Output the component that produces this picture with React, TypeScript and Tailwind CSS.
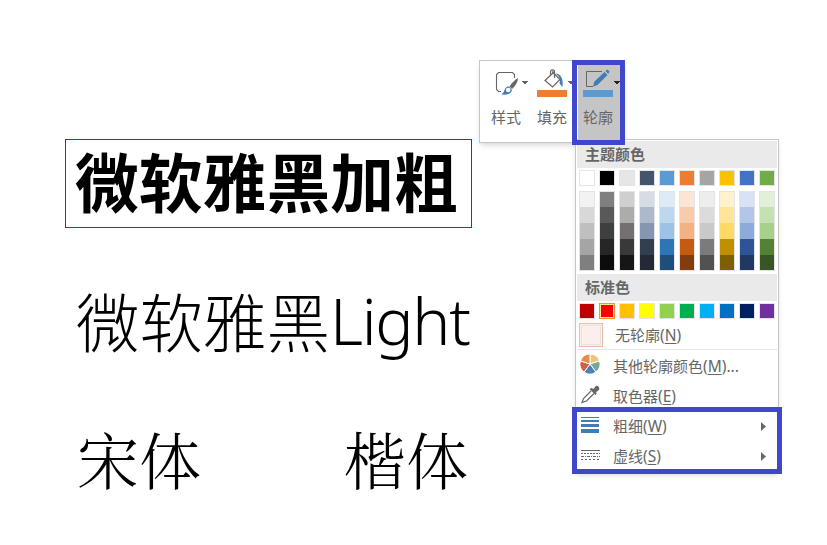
import React from "react";

const themeColors = [
  "#ffffff", "#000000", "#e7e6e6", "#44546a", "#5b9bd5",
  "#ed7d31", "#a5a5a5", "#ffc000", "#4472c4", "#70ad47",
];

const shades = [
  ["#f2f2f2", "#d8d8d8", "#bfbfbf", "#a5a5a5", "#7f7f7f"],
  ["#7f7f7f", "#595959", "#3f3f3f", "#262626", "#0c0c0c"],
  ["#d0cece", "#aeabab", "#757070", "#3a3838", "#171616"],
  ["#d6dce4", "#adb9ca", "#8496b0", "#323f4f", "#222a35"],
  ["#deebf6", "#bdd7ee", "#9cc3e5", "#2e75b5", "#1e4e79"],
  ["#fbe5d5", "#f7cbac", "#f4b183", "#c55a11", "#833c0b"],
  ["#ededed", "#dbdbdb", "#c9c9c9", "#7b7b7b", "#525252"],
  ["#fff2cc", "#fee599", "#ffd965", "#bf9000", "#7f6000"],
  ["#d9e2f3", "#b4c6e7", "#8eaadb", "#2f5496", "#1f3864"],
  ["#e2efd9", "#c5e0b3", "#a8d08d", "#538135", "#375623"],
];

const standardColors = [
  "#c00000", "#ff0000", "#ffc000", "#ffff00", "#92d050",
  "#00b050", "#00b0f0", "#0070c0", "#002060", "#7030a0",
];

function Caret({ dark }: { dark?: boolean }) {
  return (
    <svg width="6" height="3" className="shrink-0" shapeRendering="crispEdges">
      <path d="M0 0H6V1H5V2H4V3H2V2H1V1H0Z" fill={dark ? "#222" : "#666"} />
    </svg>
  );
}

function StyleIcon() {
  return (
    <svg width="24" height="26" viewBox="0 0 24 26" fill="none">
      <path d="M7 20.5H4.500L2.500 18.500V3.500L4.500 1.500H18.500L20.500 3.500V7" stroke="#666" strokeWidth="1.100" />
      <path d="M24 7C21 8.500 17 13 15.500 15.500L18 18C21.500 15 24 10.500 24 7Z" fill="#666" />
      <path d="M15 15.500C11.500 15.500 11 18 10 20.500C9.500 22 8 23 7 23.300C11 24 17 24 18 19Z" fill="#417cb5" />
      <circle cx="14.200" cy="19" r="2.300" fill="white" />
    </svg>
  );
}

function FillIcon() {
  return (
    <svg width="22" height="20" viewBox="0 0 22 20" fill="none">
      <path d="M9 2.500L17 10.500L9.500 18L2 11.500L11 3" stroke="#666" strokeWidth="1.200" />
      <path d="M7.500 6V3Q7.500 .8 9.500 .8T11.500 3V9" stroke="#666" strokeWidth="1.200" />
      <path d="M12.500 4.500C18 4.500 20.500 10 19.500 18L16.500 14.500C18 10 16 7 12.500 4.500Z" fill="#417cb5" />
    </svg>
  );
}

function OutlineIcon() {
  return (
    <svg width="25" height="19" viewBox="0 0 25 19" fill="none">
      <path d="M17 2.500H1.500V17.500H8" stroke="#666" />
      <path d="M8 17.500L9.500 12.500L19.500 3L22.500 6L12.500 16Z" fill="#417cb5" />
      <path d="M20.500 2L22.500 .5L24.500 2.500L23.200 5Z" fill="#417cb5" />
    </svg>
  );
}

function WheelIcon() {
  return (
    <svg width="20" height="20" viewBox="-10 -10 20 20">
      <g stroke="white" strokeWidth="1">
        <path d="M0 0V-10A10 10 0 0 1 9.510 -3.090Z" fill="#ecc57b" />
        <path d="M0 0L9.510 -3.090A10 10 0 0 1 5.880 8.090Z" fill="#77a797" />
        <path d="M0 0L5.880 8.090A10 10 0 0 1 -5.880 8.090Z" fill="#4c80b7" />
        <path d="M0 0L-5.880 8.090A10 10 0 0 1 -9.510 -3.090Z" fill="#d75e40" />
        <path d="M0 0L-9.510 -3.090A10 10 0 0 1 0 -10Z" fill="#e68e4b" />
      </g>
    </svg>
  );
}

function EyedropperIcon() {
  return (
    <svg width="19" height="19" viewBox="0 0 19 19" fill="none">
      <path d="M10 6L2.500 13.500L1 17.500L5.500 16L13 8.500" stroke="#666" strokeWidth="1.200" />
      <path d="M8.500 4L10.500 3L12.500 4L14.500 1.200Q16 0 17.500 1.500T18 5L15.200 7L15.500 9L14.500 10Z" fill="#666" />
    </svg>
  );
}

function WeightIcon() {
  return (
    <svg width="18" height="16" fill="#417cb5" shapeRendering="crispEdges">
      <rect width="18" height="1" />
      <rect y="3" width="18" height="2" />
      <rect y="7" width="18" height="3" />
      <rect y="12" width="18" height="4" />
    </svg>
  );
}

function DashIcon() {
  return (
    <svg width="19" height="10" stroke="#666" shapeRendering="crispEdges">
      <path d="M0 .5H19" />
      <path d="M0 3.500H19" strokeDasharray="2 1" />
      <path d="M0 6.500H19" strokeDasharray="3 1 1 1" />
      <path d="M0 9.500H19" strokeDasharray="2 2" />
    </svg>
  );
}

function Swatches({ colors, selected }: { colors: string[]; selected?: number }) {
  return (
    <div className="flex gap-1 px-0.5">
      {colors.map((color, i) => (
        <div
          key={color}
          className={
            i === selected
              ? "h-4 w-4 border border-[#f29436] p-px outline outline-1 -outline-offset-2 outline-[#ffe294]"
              : "h-4 w-4 border border-[#e2e4e7]"
          }
          style={{ backgroundColor: color }}
        />
      ))}
    </div>
  );
}

function Heading({ children }: { children: React.ReactNode }) {
  return (
    <div className="h-[27px] bg-[#eaeaea] pl-2 text-[15px] leading-[27px] font-bold text-[#666]">
      {children}
    </div>
  );
}

function MenuItem({ icon, label, hotkey, suffix = "", arrow }: {
  icon: React.ReactNode;
  label: string;
  hotkey: string;
  suffix?: string;
  arrow?: boolean;
}) {
  return (
    <div className="flex h-[30px] items-center pr-[11px]">
      <div className="flex w-9 shrink-0 pl-1">{icon}</div>
      <div className="flex-1 text-[15px] leading-[30px] whitespace-nowrap">
        {label}<span className="text-[15.500px]">(<span className="underline underline-offset-2">{hotkey}</span>){suffix}</span>
      </div>
      {arrow && (
        <svg width="5" height="9"><path d="M0 0L5 4.500L0 9Z" fill="#666" /></svg>
      )}
    </div>
  );
}

function Tool({ icon, label, active }: { icon: React.ReactNode; label: string; active?: boolean }) {
  return (
    <div className={`flex h-[81px] w-[46px] flex-col pl-[5px] ${active ? "bg-[#c5c5c5]" : ""}`}>
      <div className="flex h-[43px] w-[42px] items-start">{icon}</div>
      <div className="h-[26px] text-[15px] leading-[26px]">{label}</div>
    </div>
  );
}

export default function App() {
  return (
    <main className="relative flex h-[545px] w-[827px] overflow-hidden bg-white font-['Noto_Sans','Noto_Sans_CJK_SC',sans-serif]">
      <section className="w-[479px] shrink-0 pt-[139px] pl-[65px] whitespace-nowrap text-black">
        <div className="h-[89px] w-[407px] border border-[#e00000] pl-[9px] font-['Noto_Sans_CJK_SC',sans-serif] text-[63.800px] leading-[79px] font-bold">
          微软雅黑加粗
        </div>
        <div className="mt-[46px] flex h-[90px] pl-[11px] text-[63.500px] leading-[90px] font-light">
          <span className="font-['Noto_Sans_CJK_SC_Light','Noto_Sans_CJK_SC',sans-serif]">微软雅黑</span>
          <span className="font-['Noto_Sans',sans-serif] text-[64px] leading-[93px] tracking-[-1.300px]">Light</span>
        </div>
        <div className="mt-[50px] flex h-[90px] gap-[143px] pl-[12px] font-['Noto_Serif_CJK_SC','AR_PL_UMing_CN','Noto_Sans_CJK_SC',serif] text-[62px] leading-[90px] font-light">
          <span>宋体</span>
          <span className="font-['KaiTi','AR_PL_UKai_CN','Noto_Serif_CJK_SC','Noto_Sans_CJK_SC',serif]">楷体</span>
        </div>
      </section>

      <aside className="pt-[60px] text-[#666]">
        <div className="flex h-[83px] w-[146px] border border-[#c6c6c6] bg-white pl-[6px] shadow-md">
          <Tool
            label="样式"
            icon={<><div className="ml-[3px] pt-[10px]"><StyleIcon /></div><div className="ml-1 pt-[20px]"><Caret /></div></>}
          />
          <Tool
            label="填充"
            icon={
              <div className="flex flex-col pt-[8px]">
                <div className="flex h-[21px] items-start"><div className="ml-[6px]"><FillIcon /></div><div className="ml-[3px] pt-3"><Caret /></div></div>
                <div className="h-[7px] w-[30px] bg-[#ed7d31]" />
              </div>
            }
          />
          <Tool
            active
            label="轮廓"
            icon={
              <div className="flex flex-col pt-[8px]">
                <div className="flex h-[21px] items-start"><div className="ml-[2px]"><OutlineIcon /></div><div className="ml-[4px] pt-3"><Caret dark /></div></div>
                <div className="h-[7px] w-[30px] bg-[#5b9bd5]" />
              </div>
            }
          />
        </div>

        <div className="-mt-1 ml-24 h-[334px] w-[204px] border border-[#c6c6c6] bg-white p-px shadow-md">
          <Heading>主题颜色</Heading>
          <div className="pt-0.5"><Swatches colors={themeColors} /></div>
          <div className="flex gap-1 px-0.5 pt-[5px] pb-[3px]">
            {shades.map((column) => (
              <div key={column[0]} className="flex h-20 w-4 flex-col border border-[#e2e4e7]">
                {column.map((color, i) => (
                  <div
                    key={color}
                    className={i === 0 || i === 4 ? "h-[15px]" : "h-4"}
                    style={{ backgroundColor: color }}
                  />
                ))}
              </div>
            ))}
          </div>
          <Heading>标准色</Heading>
          <div className="pt-0.5"><Swatches colors={standardColors} selected={1} /></div>
          <div className="flex h-[30px] items-start pt-1 pl-0.5">
            <div className="h-6 w-6 border border-[#f5b99b] bg-[#fcefeb] p-px">
              <div className="h-full w-full border border-[#e2e4e7]" />
            </div>
            <div className="ml-3 text-[15px] leading-[25px]">无轮廓<span className="text-[15.500px]">(<span className="underline underline-offset-2">N</span>)</span></div>
          </div>
          <div className="mb-px h-px bg-[#e2e4e7]" />
          <MenuItem icon={<div className="-mt-1 -ml-px"><WheelIcon /></div>} label="其他轮廓颜色" hotkey="M" suffix="..." />
          <MenuItem icon={<div className="-mt-1"><EyedropperIcon /></div>} label="取色器" hotkey="E" />
          <MenuItem icon={<div className="-mt-0.5"><WeightIcon /></div>} label="粗细" hotkey="W" arrow />
          <MenuItem icon={<div className="-mt-0.5"><DashIcon /></div>} label="虚线" hotkey="S" arrow />
        </div>
      </aside>

      <div className="absolute top-[60px] left-[572px] h-[85px] w-[53px] border-5 border-[#3f48cc]" />
      <div className="absolute top-[407px] left-[572px] h-[67px] w-[210px] border-5 border-[#3f48cc]" />
    </main>
  );
}
